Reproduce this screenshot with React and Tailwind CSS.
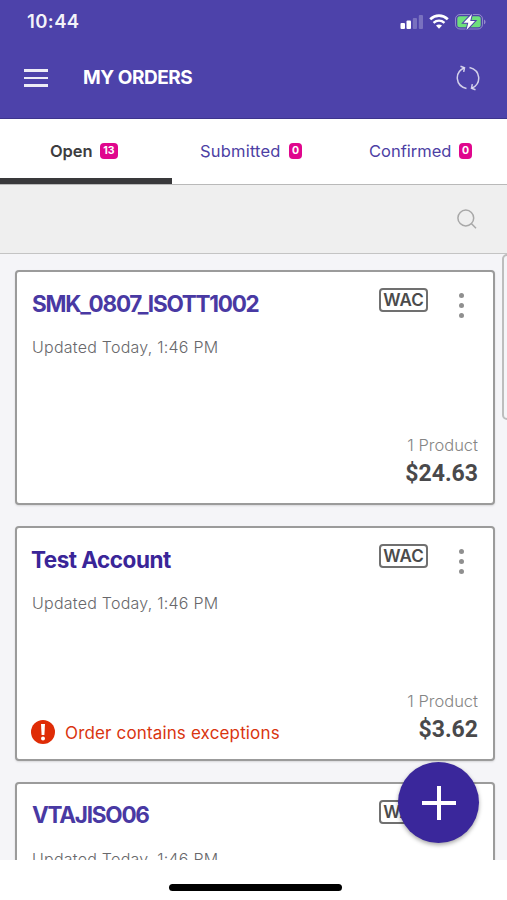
const INTER = "font-['Inter','Open_Sans',sans-serif]";

function StatusBar() {
  return (
    <div className="flex h-[42px] items-center justify-between pl-[27px] pr-[21px]">
      <span className="text-[18.5px] font-semibold leading-5 tracking-[0.4px] text-white/95">10:44</span>
      <svg className="h-5 w-[87px]" viewBox="0 0 87 20" fill="none">
        <rect x="1.500" y="12" width="4.500" height="6" rx="1" fill="#fff" />
        <rect x="7.500" y="9.500" width="4.500" height="8.500" rx="1" fill="#fff" />
        <rect x="13.800" y="7" width="4.200" height="11" rx="1" fill="#fff" opacity=".25" />
        <rect x="19.800" y="4" width="4.200" height="14" rx="1" fill="#fff" opacity=".25" />
        <path d="M31.200 8.300C36.500 3.300 43.500 3.300 48.800 8.300" stroke="#fff" strokeWidth="2.700" />
        <path d="M34.500 11.800c3.300-2.900 7.700-2.900 11 0" stroke="#fff" strokeWidth="2.400" />
        <path d="M37 14.600c1.700-1.400 4.300-1.400 6 0l-3 3.200z" fill="#fff" />
        <rect x="56.500" y="3.500" width="27" height="14.500" rx="4.500" stroke="#fff" strokeOpacity=".38" />
        <rect x="58.300" y="5.300" width="23.400" height="10.900" rx="2.500" fill="#6ee07c" />
        <path d="M85 8.500v4.800c2-.8 2-4 0-4.800z" fill="#fff" opacity=".4" />
        <path d="M73 3l-8.500 8.700h4.800L67.500 19l8.500-9h-4.800z" fill="#fff" stroke="#4d42aa" strokeWidth="2" paintOrder="stroke" />
      </svg>
    </div>
  );
}

function Header() {
  return (
    <header className="h-[119px] border-b border-[#3d348c] bg-[#4d42aa]">
      <StatusBar />
      <div className="flex h-[72px] items-center pl-6 pr-[27px]">
        <div className="flex w-6 flex-col gap-[5px]">
          <i className="h-[2.500px] bg-white/90" />
          <i className="h-[2.500px] bg-white/90" />
          <i className="h-[2.500px] bg-white/90" />
        </div>
        <h1 className="ml-[35px] text-[19px] font-bold leading-6 tracking-[-0.45px] text-white">MY ORDERS</h1>
        <svg className="ml-auto h-[26px] w-6" viewBox="0 0 24 26" fill="none" stroke="#fff" strokeOpacity=".75" strokeWidth="1.500">
          <path d="M10.500 23.500C-1 20.500-1.500 7.500 7.800 3" />
          <path d="M4.500 1.300l4 1.500-.8 4" />
          <path d="M13.500 2.500C25 5.500 25.500 18.500 16.200 23" />
          <path d="M19.500 24.700l-4-1.500.8-4" />
        </svg>
      </div>
    </header>
  );
}

function Badge({ children, className }) {
  return (
    <span className={`mb-px flex h-[16px] items-center justify-center rounded-[4px] bg-[#e0068d] pt-px text-[10.500px] font-bold leading-none text-white ${className}`}>
      {children}
    </span>
  );
}

function Tabs() {
  return (
    <nav className="flex h-[66px] border-b border-[#b9b9b9] bg-white text-[16.500px] font-medium text-[#4d3fa4]">
      <div className="flex w-[172px] items-center rounded-tr-sm border-b-[6px] border-[#39393b] pl-[50px] pt-[5px] text-[#3d3d3f]">
        <span className="w-[44px] font-semibold tracking-[-0.1px]">Open</span>
        <Badge className="ml-[6px] w-[18px]">13</Badge>
      </div>
      <div className="flex w-[168px] items-center pl-7">
        <span className="w-[82px] font-normal tracking-[0.2px]">Submitted</span>
        <Badge className="ml-[7px] w-[13px]">0</Badge>
      </div>
      <div className="flex flex-1 items-center pl-[29px]">
        <span className="w-[82px] font-normal">Confirmed</span>
        <Badge className="ml-[8px] w-[13px]">0</Badge>
      </div>
    </nav>
  );
}

function SearchBar() {
  return (
    <div className="flex h-[69px] items-center justify-end border-b border-[#c4c4c4] bg-[#efefef] pr-[30px]">
      <svg className="h-5 w-5" viewBox="0 0 20 20" fill="none" stroke="#a8a8a8" strokeWidth="1.500">
        <circle cx="8.800" cy="9" r="7.900" />
        <path d="M14.300 14.500l4.700 4.700" />
      </svg>
    </div>
  );
}

function OrderCard({ title, titleClass, price, exception }) {
  return (
    <article className="flex h-[235px] shrink-0 flex-col rounded-[4px] border-2 border-[#9b9b9b] bg-white pl-[14px] pr-[15px] shadow-[0_1px_2px_rgba(0,0,0,0.12)]">
      <div className="flex h-[60px] items-start">
        <h2 className={`text-[22.500px] font-bold leading-8 whitespace-nowrap ${titleClass}`}>{title}</h2>
        <span className="ml-auto mt-[16px] flex h-[24px] w-[49px] items-center justify-center rounded-[4px] border-2 border-[#707070] text-[17px] font-semibold leading-none text-[#4b4b4b]">
          WAC
        </span>
        <div className="ml-[31px] mr-[14px] mt-[21px] flex flex-col gap-[5px]">
          <i className="size-[5px] rounded-full bg-[#8f8f8f]" />
          <i className="size-[5px] rounded-full bg-[#8f8f8f]" />
          <i className="size-[5px] rounded-full bg-[#8f8f8f]" />
        </div>
      </div>
      <p className="mt-[3px] pl-px text-[16px] font-light leading-6 tracking-[0.24px] text-[#68686b]">Updated Today, 1:46 PM</p>
      <div className="mb-[13px] mt-auto flex items-end justify-between">
        <div className="mb-px flex items-center gap-[10px]">
          {exception && (
            <>
              <svg className="size-6" viewBox="0 0 24 24">
                <circle cx="12" cy="12" r="12" fill="#df2c06" />
                <path d="M10 4h4l-.6 11h-2.800z" fill="#fff" />
                <circle cx="12" cy="18.500" r="2" fill="#fff" />
              </svg>
              <span className="mt-[3px] text-[17px] leading-6 tracking-[0.15px] text-[#d9350f]">{exception}</span>
            </>
          )}
        </div>
        <div className="flex flex-col items-end">
          <span className="mb-px text-[16.500px] font-light leading-6 text-[#858585]">1 Product</span>
          <span className="font-['Roboto',sans-serif] text-[23px] font-bold leading-8 text-[#49494b]">{price}</span>
        </div>
      </div>
    </article>
  );
}

export default function App() {
  return (
    <div className={`relative h-[900px] w-[507px] overflow-hidden bg-white ${INTER}`}>
      <Header />
      <Tabs />
      <SearchBar />
      <main className="relative flex h-[606px] flex-col gap-[21px] overflow-hidden bg-[#f5f5f8] pl-[15px] pr-[12px] pt-[16px]">
        <OrderCard title="SMK_0807_ISOTT1002" titleClass="mt-[16px] pl-px text-[#4939a3] tracking-[-1.25px]" price="$24.63" />
        <OrderCard title="Test Account" titleClass="mt-[16px] text-[#3a2598] tracking-[-0.5px]" price="$3.62" exception="Order contains exceptions" />
        <OrderCard title="VTAJISO06" titleClass="mt-[15px] pl-px text-[#4939a3] tracking-[-1.25px]" price="$3.62" />
        <div className="absolute left-[502px] top-0 h-[166px] w-5 rounded-[5px] border-2 border-[#bdbdbd] bg-[#f5f5f8]" />
      </main>
      <footer className="flex h-10 justify-center pt-[24px]">
        <div className="mr-[-3px] h-[7px] w-[173px] rounded-full bg-black" />
      </footer>
      <button className="absolute left-[398px] top-[762px] flex size-[81px] items-center justify-center rounded-full bg-[#3a279b] shadow-[0_2px_4px_rgba(0,0,0,0.35)]">
        <svg className="size-[34px]" viewBox="0 0 34 34" stroke="#fff" strokeWidth="4">
          <path d="M17 0v34M0 17h34" />
        </svg>
      </button>
    </div>
  );
}
